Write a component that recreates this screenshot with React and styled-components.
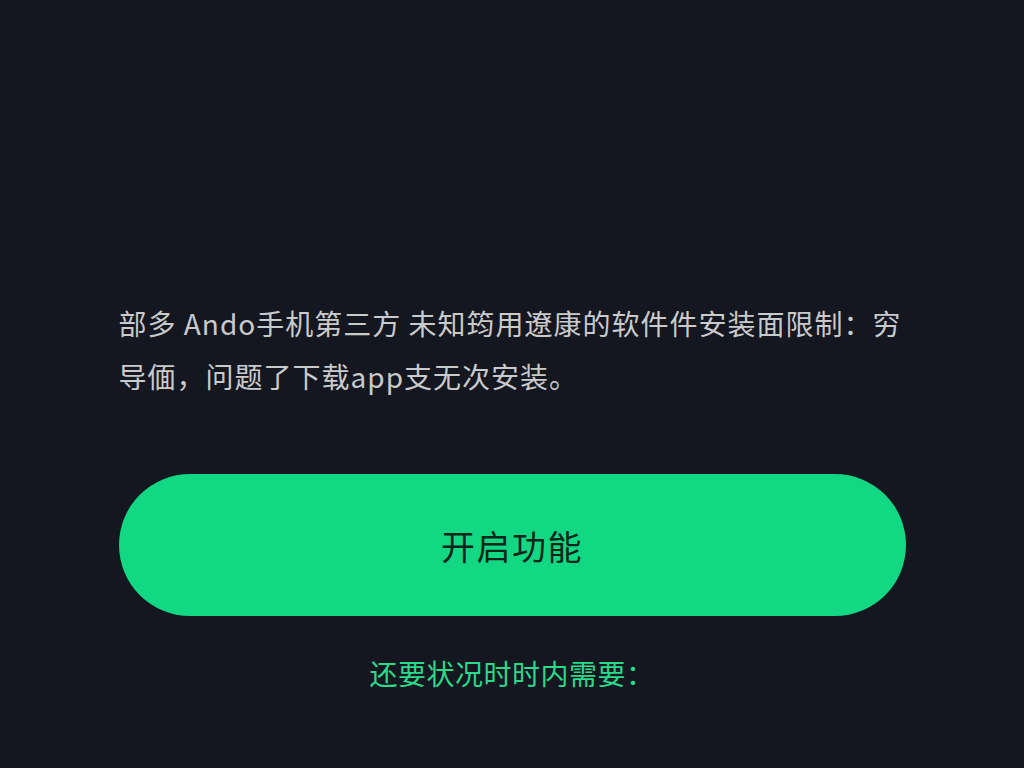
import React from 'react';
import styled, { createGlobalStyle } from 'styled-components';

const GlobalStyle = createGlobalStyle`
  html, body {
    margin: 0;
    padding: 0;
    background: #14171f;
  }
  body {
    font-family: "Noto Sans CJK SC", "Noto Sans", sans-serif;
  }
`;

const Page = styled.div`
  min-height: 768px;
  box-sizing: border-box;
  display: flex;
  justify-content: center;
  padding-top: 297px;
  background: #14171f;
`;

const Column = styled.div`
  width: 787px;
  display: flex;
  flex-direction: column;
`;

const Notice = styled.p`
  margin: 0;
  font-size: 28px;
  line-height: 53px;
  letter-spacing: 1px;
  white-space: nowrap;
  color: #c9cacc;
`;

const Action = styled.button`
  margin-top: 71px;
  height: 142px;
  width: 100%;
  border: none;
  border-radius: 71px;
  background: #13d883;
  color: #0e2519;
  font-family: "Noto Sans CJK SC", sans-serif;
  font-size: 34px;
  letter-spacing: 1.5px;
  cursor: pointer;
`;

const Hint = styled.div`
  margin-top: 37px;
  text-align: center;
  font-size: 28px;
  line-height: 40px;
  letter-spacing: 0.5px;
  color: #2bd98a;
`;

export default function App() {
  return (
    <>
      <GlobalStyle />
      <Page>
        <Column>
          <Notice>
            部多 Ando手机第三方 未知筠用遼康的软件件安装面限制：穷
            <br />
            导偭，问题了下载app支无次安装。
          </Notice>
          <Action>开启功能</Action>
          <Hint>还要状况时时内需要：</Hint>
        </Column>
      </Page>
    </>
  );
}
